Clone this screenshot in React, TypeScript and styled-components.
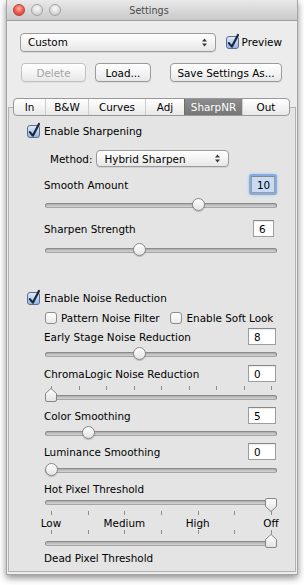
import React, { useId } from "react";
import styled, { createGlobalStyle } from "styled-components";

const Global = createGlobalStyle`
  * { box-sizing: border-box; }
  html, body { margin: 0; padding: 0; background: #ffffff; }
  body {
    width: 304px;
    height: 585px;
    overflow: hidden;
    font-family: "DejaVu Sans", sans-serif;
    font-size: 10.4px;
    color: #000;
  }
`;

const Window = styled.div`
  margin-left: 6px;
  width: 292px;
  height: 575px;
  border: 1px solid #a6a6a6;
  border-top: none;
  background: #ececec;
  box-shadow: 0 3px 7px rgba(0, 0, 0, 0.45);
  display: flex;
  flex-direction: column;
`;

const TitleBar = styled.div`
  height: 21px;
  flex: none;
  display: grid;
  grid-template-columns: 60px 1fr 60px;
  align-items: center;
  background: linear-gradient(#e9e9e9, #c9c9c9);
  border-bottom: 1px solid #9c9c9c;
`;

const Lights = styled.div`
  display: flex;
  gap: 6px;
  padding-left: 6px;
`;

const Light = styled.span<{ $red?: boolean }>`
  width: 12px;
  height: 12px;
  border-radius: 50%;
  border: 1px solid ${(p) => (p.$red ? "#b3443d" : "#a3a3a3")};
  background: ${(p) =>
    p.$red
      ? "radial-gradient(circle at 50% 35%, #ffb2a8 0, #f0574d 55%, #c9352c 100%)"
      : "radial-gradient(circle at 50% 35%, #fafafa 0, #dcdcdc 55%, #bdbdbd 100%)"};
`;

const Title = styled.div`
  text-align: center;
  font-size: 9.6px;
  color: #4a4a4a;
  padding-right: 6px;
`;

const Top = styled.div`
  padding: 0 15px 0 13px;
  display: flex;
  flex-direction: column;
`;

const Row = styled.div<{ $mt?: number; $h?: number; $ml?: number }>`
  display: flex;
  align-items: center;
  margin-top: ${(p) => p.$mt ?? 0}px;
  margin-left: ${(p) => p.$ml ?? 0}px;
  height: ${(p) => p.$h ?? 18}px;
  flex: none;
`;

const Popup = styled.div<{ $w: number; $h?: number; $ml?: number }>`
  width: ${(p) => p.$w}px;
  height: ${(p) => p.$h ?? 19}px;
  margin-left: ${(p) => p.$ml ?? 0}px;
  border: 1px solid #9b9b9b;
  border-radius: 4px;
  background: linear-gradient(#ffffff, #f1f1f1 60%, #e6e6e6);
  box-shadow: 0 1px 0 rgba(0, 0, 0, 0.08);
  display: flex;
  align-items: center;
  justify-content: space-between;
  padding: 0 8px 0 7px;
`;

const Button = styled.div<{ $w: number; $ml?: number; $off?: boolean }>`
  width: ${(p) => p.$w}px;
  margin-left: ${(p) => p.$ml ?? 0}px;
  height: 19px;
  border: 1px solid ${(p) => (p.$off ? "#c2c2c2" : "#9a9a9a")};
  border-radius: 4px;
  background: linear-gradient(#ffffff, #f2f2f2 60%, #e7e7e7);
  color: ${(p) => (p.$off ? "#a3a3a3" : "#000")};
  display: flex;
  align-items: center;
  justify-content: center;
  box-shadow: 0 1px 0 rgba(0, 0, 0, 0.06);
`;

const CheckLabel = styled.span<{ $ml?: number }>`
  margin-left: ${(p) => p.$ml ?? 3}px;
  white-space: nowrap;
`;

const Spacer = styled.span<{ $w: number }>`
  width: ${(p) => p.$w}px;
  flex: none;
`;

const TabView = styled.div`
  margin: 16px 1px 2px 1px;
  flex: 1;
  display: flex;
  flex-direction: column;
`;

const Tabs = styled.div`
  position: relative;
  z-index: 1;
  display: flex;
  margin-left: 5px;
  height: 18px;
  margin-bottom: -9px;
  width: max-content;
  border: 1px solid #999;
  border-radius: 4px;
  background: linear-gradient(#ffffff, #f2f2f2 60%, #e8e8e8);
  overflow: hidden;
`;

const Tab = styled.div<{ $w: number; $active?: boolean }>`
  width: ${(p) => p.$w}px;
  display: flex;
  align-items: center;
  justify-content: center;
  border-left: 1px solid ${(p) => (p.$active ? "#6e6e6e" : "#cdcdcd")};
  background: ${(p) => (p.$active ? "linear-gradient(#8c8c8c, #767676)" : "transparent")};
  color: ${(p) => (p.$active ? "#fff" : "#000")};
  &:first-child { border-left: none; }
`;

const Panel = styled.div`
  flex: 1;
  border: 1px solid #b2b2b2;
  background: #e4e4e4;
  padding: 0 18px 0 18px;
  display: flex;
  flex-direction: column;
`;

const Indent = styled.div`
  margin-left: 17px;
  display: flex;
  flex-direction: column;
`;

const Label = styled.span`
  flex: 1;
  white-space: nowrap;
`;

const Field = styled.div<{ $w: number; $mr?: number; $focus?: boolean }>`
  width: ${(p) => p.$w}px;
  margin-right: ${(p) => p.$mr ?? 1}px;
  height: 17px;
  border: 1px solid #9d9d9d;
  border-top-color: #888;
  background: ${(p) => (p.$focus ? "#c7dbf5" : "#fff")};
  box-shadow: ${(p) =>
    p.$focus ? "0 0 0 2px #86ace0, 0 0 3px 2px #a8c6ee" : "inset 0 1px 1px rgba(0,0,0,0.08)"};
  border-radius: ${(p) => (p.$focus ? "1px" : "0")};
  display: flex;
  align-items: center;
  padding-left: 5px;
`;

const Slider = styled.div<{ $mt?: number }>`
  position: relative;
  margin-top: ${(p) => p.$mt ?? 0}px;
  margin-left: 1px;
  width: 232px;
  height: 14px;
  flex: none;
`;

const Track = styled.div`
  margin-top: 5px;
  height: 5px;
  border-radius: 3px;
  border: 1px solid #8a8a8a;
  border-bottom-color: #a5a5a5;
  background: linear-gradient(#acacac, #d6d6d6);
`;

const RoundKnob = styled.div`
  position: absolute;
  top: 0;
  width: 13px;
  height: 13px;
  border-radius: 50%;
  border: 1px solid #878787;
  background: linear-gradient(#ffffff, #e4e4e4);
  box-shadow: 0 1px 1px rgba(0, 0, 0, 0.2);
`;

const PointKnob = styled.svg<{ $down?: boolean; $right?: boolean }>`
  position: absolute;
  top: ${(p) => (p.$down ? 3 : -2)}px;
  ${(p) => (p.$right ? "right: 0;" : "left: 0;")}
  width: 12px;
  height: 15px;
  overflow: visible;
`;

const Ticks = styled.div<{ $mt?: number }>`
  margin-top: ${(p) => p.$mt ?? 0}px;
  margin-left: 7px;
  width: 221px;
  height: 4px;
  display: flex;
  justify-content: space-between;
  flex: none;
`;

const Tick = styled.span`
  width: 1px;
  height: 4px;
  background: #8c8c8c;
`;

const ScaleLabels = styled.div<{ $mt?: number }>`
  margin-top: ${(p) => p.$mt ?? 0}px;
  margin-left: -18px;
  width: 270px;
  height: 12px;
  display: flex;
  justify-content: space-between;
  align-items: center;
  flex: none;
`;

const ScaleLabel = styled.span`
  width: 50px;
  text-align: center;
`;

function Arrows() {
  return (
    <svg width="5" height="9" viewBox="0 0 5 9">
      <path d="M0 3.6 L2.5 0.6 L5 3.6 Z" fill="#3a3a3a" />
      <path d="M0 5.4 L5 5.4 L2.5 8.4 Z" fill="#3a3a3a" />
    </svg>
  );
}

function Check({ on, size = 13 }: { on?: boolean; size?: number }) {
  const id = useId();
  const s = size;
  return (
    <svg width={s} height={s} viewBox={`0 0 ${s} ${s}`} style={{ overflow: "visible", flex: "none" }}>
      <defs>
        <linearGradient id={id} x1="0" y1="0" x2="0" y2="1">
          {on ? (
            <>
              <stop offset="0" stopColor="#e2edf9" />
              <stop offset="1" stopColor="#95b6e0" />
            </>
          ) : (
            <>
              <stop offset="0" stopColor="#ffffff" />
              <stop offset="1" stopColor="#e8e8e8" />
            </>
          )}
        </linearGradient>
      </defs>
      <rect
        x="0.5"
        y="0.5"
        width={s - 1}
        height={s - 1}
        rx="2.5"
        fill={`url(#${id})`}
        stroke={on ? "#5b6d8a" : "#8d8d8d"}
      />
      {on && (
        <path
          d={`M${s * 0.22} ${s * 0.55} L${s * 0.45} ${s * 0.82} L${s * 0.92} ${-s * 0.08}`}
          fill="none"
          stroke="#1b2740"
          strokeWidth="2.2"
          strokeLinecap="round"
          strokeLinejoin="round"
        />
      )}
    </svg>
  );
}

function Round({ pos, mt }: { pos: number; mt: number }) {
  return (
    <Slider $mt={mt}>
      <Track />
      <RoundKnob style={{ left: Math.round(pos * 219) }} />
    </Slider>
  );
}

function Pointer({ mt, down, right }: { mt: number; down?: boolean; right?: boolean }) {
  const id = useId();
  const d = down
    ? "M0.5 2 Q0.5 0.5 2 0.5 H10 Q11.5 0.5 11.5 2 V8.5 L6 13.5 L0.5 8.5 Z"
    : "M6 0.5 L11.5 5.5 V12 Q11.5 13.5 10 13.5 H2 Q0.5 13.5 0.5 12 V5.5 Z";
  return (
    <Slider $mt={mt}>
      <Track />
      <PointKnob $down={down} $right={right} viewBox="0 0 12 15">
        <defs>
          <linearGradient id={id} x1="0" y1="0" x2="0" y2="1">
            <stop offset="0" stopColor="#ffffff" />
            <stop offset="1" stopColor="#e2e2e2" />
          </linearGradient>
        </defs>
        <path d={d} fill={`url(#${id})`} stroke="#858585" />
      </PointKnob>
    </Slider>
  );
}

function TickRow({ n, mt }: { n: number; mt: number }) {
  return (
    <Ticks $mt={mt}>
      {Array.from({ length: n }).map((_, i) => (
        <Tick key={i} />
      ))}
    </Ticks>
  );
}

const tabs = [
  { t: "In", w: 31 },
  { t: "B&W", w: 43 },
  { t: "Curves", w: 57 },
  { t: "Adj", w: 39 },
  { t: "SharpNR", w: 58 },
  { t: "Out", w: 47 },
];

export default function App() {
  return (
    <>
      <Global />
      <Window>
        <TitleBar>
          <Lights>
            <Light $red />
            <Light />
            <Light />
          </Lights>
          <Title>Settings</Title>
          <span />
        </TitleBar>

        <Top>
          <Row $mt={11} $h={20}>
            <Popup $w={197}>
              <span>Custom</span>
              <Arrows />
            </Popup>
            <Row $ml={10}>
              <Check on />
              <CheckLabel $ml={3}>Preview</CheckLabel>
            </Row>
          </Row>
          <Row $mt={11} $h={19} $ml={1}>
            <Button $w={65} $off>
              Delete
            </Button>
            <Button $w={56} $ml={9}>
              Load...
            </Button>
            <Button $w={112} $ml={19}>
              Save Settings As...
            </Button>
          </Row>
        </Top>

        <TabView>
          <Tabs>
            {tabs.map((t) => (
              <Tab key={t.t} $w={t.w} $active={t.t === "SharpNR"}>
                {t.t}
              </Tab>
            ))}
          </Tabs>
          <Panel>
            <Row $mt={14}>
              <Check on />
              <CheckLabel $ml={4}>Enable Sharpening</CheckLabel>
            </Row>
            <Indent>
              <Row $mt={9} $h={19} $ml={6}>
                <span>Method:</span>
                <Popup $w={133} $h={17} $ml={4}>
                  <span>Hybrid Sharpen</span>
                  <Arrows />
                </Popup>
              </Row>
              <Row $mt={7} $h={19}>
                <Label>Smooth Amount</Label>
                <Field $w={24} $mr={2} $focus>
                  10
                </Field>
              </Row>
              <Round pos={0.67} mt={4} />
              <Row $mt={7} $h={19}>
                <Label>Sharpen Strength</Label>
                <Field $w={21} $mr={3}>
                  6
                </Field>
              </Row>
              <Round pos={0.4} mt={5} />
            </Indent>

            <Row $mt={32}>
              <Check on />
              <CheckLabel $ml={4}>Enable Noise Reduction</CheckLabel>
            </Row>
            <Indent>
              <Row $mt={2} $ml={1}>
                <Check size={12} />
                <CheckLabel $ml={4}>Pattern Noise Filter</CheckLabel>
                <Spacer $w={10} />
                <Check size={12} />
                <CheckLabel $ml={5}>Enable Soft Look</CheckLabel>
              </Row>
              <Row $h={19}>
                <Label>Early Stage Noise Reduction</Label>
                <Field $w={28}>8</Field>
              </Row>
              <Round pos={0.4} mt={1} />
              <Row $mt={3} $h={19}>
                <Label>ChromaLogic Noise Reduction</Label>
                <Field $w={28}>0</Field>
              </Row>
              <TickRow n={9} mt={3} />
              <Pointer mt={0} />
              <Row $mt={2} $h={19}>
                <Label>Color Smoothing</Label>
                <Field $w={28}>5</Field>
              </Row>
              <Round pos={0.167} mt={1} />
              <Row $mt={2} $h={19}>
                <Label>Luminance Smoothing</Label>
                <Field $w={28}>0</Field>
              </Row>
              <Round pos={0} mt={2} />
              <Row $mt={6} $h={12}>
                <Label>Hot Pixel Threshold</Label>
              </Row>
              <Pointer mt={0} down right />
              <TickRow n={7} mt={2} />
              <ScaleLabels $mt={2}>
                <ScaleLabel>Low</ScaleLabel>
                <ScaleLabel>Medium</ScaleLabel>
                <ScaleLabel>High</ScaleLabel>
                <ScaleLabel>Off</ScaleLabel>
              </ScaleLabels>
              <TickRow n={7} mt={1} />
              <Pointer mt={2} right />
              <Row $mt={1} $h={14}>
                <Label>Dead Pixel Threshold</Label>
              </Row>
            </Indent>
          </Panel>
        </TabView>
      </Window>
    </>
  );
}
